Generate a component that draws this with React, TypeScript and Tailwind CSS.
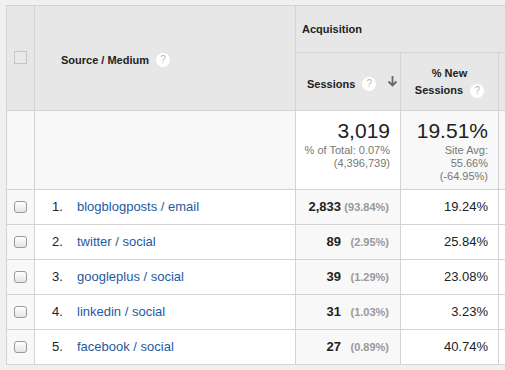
import React from 'react'

const ROWS = [
  { n: 1, label: 'blogblogposts / email', sessions: '2,833', pct: '(93.84%)', newPct: '19.24%' },
  { n: 2, label: 'twitter / social', sessions: '89', pct: '(2.95%)', newPct: '25.84%' },
  { n: 3, label: 'googleplus / social', sessions: '39', pct: '(1.29%)', newPct: '23.08%' },
  { n: 4, label: 'linkedin / social', sessions: '31', pct: '(1.03%)', newPct: '3.23%' },
  { n: 5, label: 'facebook / social', sessions: '27', pct: '(0.89%)', newPct: '40.74%' },
]

function Help() {
  return (
    <span className="ml-[7px] inline-grid h-[14px] w-[14px] place-items-center rounded-full bg-white align-middle text-[10px] font-normal leading-none text-[#b8b8b8]">
      ?
    </span>
  )
}

function SortArrow() {
  return (
    <svg width="11" height="12" viewBox="0 0 11 12" className="text-[#666]">
      <path d="M5.5 1v9M1.5 6.5l4 4 4-4" fill="none" stroke="currentColor" strokeWidth="1.8" />
    </svg>
  )
}

function RowCheck() {
  return <span className="block h-[12px] w-[13px] rounded-[3px] border border-[#9a9a9a] bg-gradient-to-b from-white to-[#e4e4e4]" />
}

const cell = 'border-r border-b border-[#d3d3d3]'

export default function App() {
  return (
    <div className="h-[370px] w-[505px] overflow-hidden bg-[#f0f0f0] pl-[6px] pt-[5px] font-['Liberation_Sans',Arial,sans-serif] text-[#222]">
      <div className="grid w-[620px] grid-cols-[28px_261px_105px_98px_127px] grid-rows-[47px_58px_79px_35px_35px_35px_35px_35px] border-l border-t border-[#d3d3d3] bg-white">
        {/* header */}
        <div className={`${cell} row-span-2 bg-[#e7e7e7] pl-[7px] pt-[45px]`}>
          <span className="block h-[13px] w-[13px] border border-[#c6c6c6] bg-[#e9e9e9]" />
        </div>
        <div className={`${cell} row-span-2 flex items-center bg-[#e7e7e7] pl-[26px] pt-[4px] text-[11px] font-bold`}>
          Source / Medium
          <Help />
        </div>
        <div className={`${cell} col-span-3 flex items-center border-r-0 bg-[#e7e7e7] pl-[6px] text-[11px] font-bold`}>
          Acquisition
        </div>
        <div className={`${cell} flex items-center bg-[#e7e7e7] pl-[11px] pt-[5px] text-[11px] font-bold`}>
          Sessions
          <Help />
          <span className="ml-[11px] -mt-[6px]">
            <SortArrow />
          </span>
        </div>
        <div className={`${cell} flex flex-col items-center justify-center bg-[#e7e7e7] text-[11px] font-bold leading-[17px]`}>
          <span>% New</span>
          <span>
            Sessions
            <Help />
          </span>
        </div>
        <div className={`${cell} bg-[#e7e7e7]`} />

        {/* summary */}
        <div className={`${cell} bg-[#f8f8f8]`} />
        <div className={`${cell} bg-[#f8f8f8]`} />
        <div className={`${cell} flex flex-col items-end bg-white pr-[10px] pt-[9px] text-right`}>
          <span className="text-[21px] leading-[22px]">3,019</span>
          <span className="mt-[2px] text-[11px] leading-[13px] text-[#777]">% of Total: 0.07%</span>
          <span className="text-[11px] leading-[13px] text-[#777]">(4,396,739)</span>
        </div>
        <div className={`${cell} flex flex-col items-end bg-[#f8f8f8] pr-[10px] pt-[9px] text-right`}>
          <span className="text-[21px] leading-[22px]">19.51%</span>
          <span className="mt-[2px] text-[11px] leading-[13px] text-[#777]">Site Avg:</span>
          <span className="text-[11px] leading-[13px] text-[#777]">55.66%</span>
          <span className="text-[11px] leading-[13px] text-[#777]">(-64.95%)</span>
        </div>
        <div className={`${cell} bg-[#f8f8f8]`} />

        {/* rows */}
        {ROWS.map((r) => (
          <React.Fragment key={r.n}>
            <div className={`${cell} flex items-center bg-[#f8f8f8] pl-[7px]`}>
              <RowCheck />
            </div>
            <div className={`${cell} flex items-center text-[13px]`}>
              <span className="w-[25px] pl-[17px] box-content">{r.n}.</span>
              <span className="text-[#1e5aa0]">{r.label}</span>
            </div>
            <div className={`${cell} flex items-center justify-end bg-[#f8f8f8] pr-[11px]`}>
              <span className="text-[13px] font-bold">{r.sessions}</span>
              <span className="w-[48px] text-right text-[11px] font-bold text-[#999]">{r.pct}</span>
            </div>
            <div className={`${cell} flex items-center justify-end pr-[10px] text-[13px]`}>{r.newPct}</div>
            <div className={`${cell}`} />
          </React.Fragment>
        ))}
      </div>
    </div>
  )
}
